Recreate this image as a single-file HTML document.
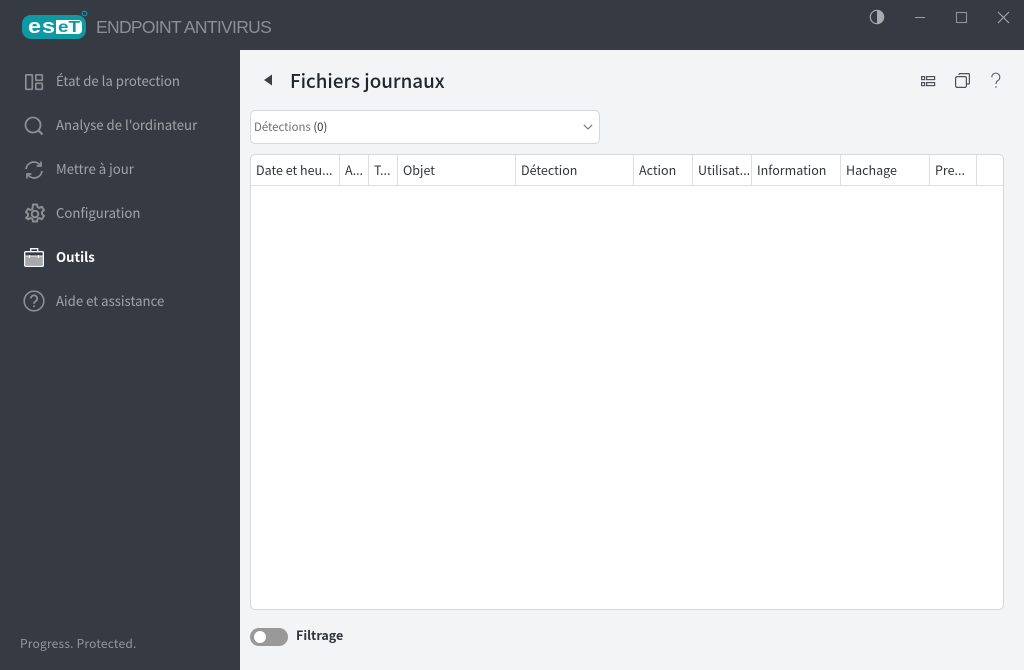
<!DOCTYPE html>
<html lang="fr"><head><meta charset="utf-8"><title>ESET Endpoint Antivirus</title>
<style>
html,body{margin:0;padding:0}
body{width:1024px;height:670px;overflow:hidden;position:relative;background:#f3f4f6;font-family:"Noto Sans CJK JP","Liberation Sans",sans-serif;}
.a{position:absolute;white-space:nowrap}
#top{left:0;top:0;width:1024px;height:50px;background:#363b43}
#side{left:0;top:50px;width:240px;height:620px;background:#363b43}
.nav{left:56px;font-size:13.2px;line-height:20px;color:#a0a3a7}
.th{top:155px;height:30px;line-height:30px;font-size:12.500px;color:#30353c;padding-left:5px;box-sizing:border-box}
.sep{top:155px;width:1px;height:30px;background:#dcdee0}
svg{position:absolute;overflow:visible}
</style></head><body>
<div class="a" id="top"></div><div class="a" id="side"></div>

<svg style="left:22px;top:15px" width="66" height="25" viewBox="0 0 66 25">
<rect x="0" y="0" width="64" height="24" rx="9" fill="#0f9aa3"/>
<path d="M34 5h22a4 4 0 0 1 4 4v6a4 4 0 0 1-4 4H34z" fill="#fff"/>
<text x="6" y="18" font-family="Liberation Sans" font-weight="700" font-size="20" fill="#fff" textLength="13" lengthAdjust="spacingAndGlyphs">e</text>
<text x="20" y="18" font-family="Liberation Sans" font-weight="700" font-size="20" fill="#fff" textLength="13" lengthAdjust="spacingAndGlyphs">s</text>
<text x="36" y="17" font-family="Liberation Sans" font-weight="700" font-size="16" fill="#0f9aa3" textLength="22" lengthAdjust="spacingAndGlyphs">eT</text>
<circle cx="62.500" cy="-1.500" r="2.300" fill="none" stroke="#0f9aa3" stroke-width="1.200"/>
</svg>
<div class="a" style="left:96px;top:15px;font-size:17.500px;line-height:24px;color:#8b8f95;letter-spacing:-.68px;font-family:'Liberation Sans',sans-serif">ENDPOINT ANTIVIRUS</div>

<svg style="left:869px;top:9px" width="16" height="16" viewBox="0 0 16 16"><circle cx="8" cy="8" r="6.700" fill="none" stroke="#a9abae" stroke-width="1.200"/><path d="M8 1.300a6.700 6.700 0 0 1 0 13.400z" fill="#a9abae"/></svg>
<svg style="left:914px;top:11px" width="12" height="12"><path d="M1 6.500h10" stroke="#9c9fa3" stroke-width="1"/></svg>
<svg style="left:956px;top:12px" width="12" height="12"><rect x=".5" y=".5" width="10" height="10" fill="none" stroke="#8f9296" stroke-width="1.100"/></svg>
<svg style="left:997px;top:11px" width="14" height="14"><path d="M1 1l11 11M12 1L1 12" stroke="#a4a6aa" stroke-width="1.100" fill="none"/></svg>

<svg style="left:24px;top:73px" width="20" height="18" viewBox="0 0 20 18" fill="none" stroke="#8b8e92" stroke-width="1.700"><rect x="1.800" y="1.800" width="6.500" height="14.500" rx=".7"/><rect x="11.800" y="1.800" width="6.500" height="5.500" rx=".7"/><rect x="11.800" y="10.300" width="6.500" height="6" rx=".7"/></svg>
<div class="a nav" style="top:71px">État de la protection</div>
<svg style="left:24px;top:116px" width="20" height="20" viewBox="0 0 20 20" fill="none" stroke="#8b8e92" stroke-width="1.800"><circle cx="9" cy="9" r="7.500"/><path d="M14.500 14.500l4 4" stroke-width="2.200"/></svg>
<div class="a nav" style="top:115px">Analyse de l'ordinateur</div>
<svg style="left:24px;top:160px" width="20" height="20" viewBox="0 0 20 20" fill="none" stroke="#8b8e92" stroke-width="1.800"><path d="M2 9a7.800 7.800 0 0 1 14-3.800"/><path d="M18 11a7.800 7.800 0 0 1-14 3.800"/><path d="M17 1.500v4.500h-4.500M3 18.500V14h4.500"/></svg>
<div class="a nav" style="top:159px">Mettre à jour</div>
<svg style="left:24px;top:203px" width="22" height="22" viewBox="0 0 22 22" fill="none" stroke="#8b8e92" stroke-width="2"><path d="M9 1.500h4l.6 2.700 1.800.8 2.400-1.300 2.200 3.400-2 1.800v2.200l2 1.800-2.200 3.400-2.400-1.300-1.800.8-.6 2.700H9l-.6-2.700-1.800-.8-2.400 1.300L2 14.900l2-1.800v-2.200L2 9.100l2.200-3.400 2.400 1.300 1.800-.8z" stroke-linejoin="round"/><circle cx="11" cy="11" r="3.300"/></svg>
<div class="a nav" style="top:203px">Configuration</div>
<svg style="left:24px;top:247px" width="21" height="21" viewBox="0 0 21 21"><path d="M6.700 5V1.700h7V5" fill="none" stroke="#f4f5f5" stroke-width="1.400"/><rect x=".7" y="4.700" width="18.600" height="14.600" rx="1" fill="#363b43" stroke="#f4f5f5" stroke-width="1.400"/><rect x="1.400" y="9" width="17.200" height="9.600" fill="#a6a8ab"/><path d="M1.400 9h17.200" stroke="#f4f5f5" stroke-width="1"/><path d="M5.500 8v3M14.500 8v3" stroke="#f4f5f5" stroke-width="1.200"/></svg>
<div class="a nav" style="top:247px;color:#fff;font-weight:700">Outils</div>
<svg style="left:23px;top:290px" width="22" height="22" viewBox="0 0 22 22" fill="none" stroke="#8b8e92" stroke-width="1.600"><circle cx="11" cy="11" r="9.800"/><path d="M7.800 8.500a3.200 3.200 0 1 1 4.800 2.800c-1.100.7-1.600 1.200-1.600 2.500" stroke-width="1.800"/><circle cx="11" cy="16.300" r="1" fill="#8b8e92" stroke="none"/></svg>
<div class="a nav" style="top:291px">Aide et assistance</div>
<div class="a" style="left:20px;top:635px;font-size:12px;line-height:18px;color:#94979b;letter-spacing:.2px">Progress. Protected.</div>

<svg style="left:263px;top:74px" width="10" height="12"><path d="M9 .5v11L1 6z" fill="#3a4047"/></svg>
<div class="a" style="left:290px;top:67px;font-size:18.800px;line-height:28px;font-weight:500;color:#1f262e">Fichiers journaux</div>
<svg style="left:920px;top:75px" width="16" height="13" viewBox="0 0 16 13" fill="none" stroke="#4a5058" stroke-width="1.200"><rect x="1.600" y="1.600" width="3" height="3"/><rect x="1.600" y="7.600" width="3" height="3"/><rect x="6.600" y="1.600" width="8" height="3"/><rect x="6.600" y="7.600" width="8" height="3"/></svg>
<svg style="left:954px;top:72px" width="17" height="17" viewBox="0 0 17 17" fill="none" stroke="#4a5058" stroke-width="1.200"><rect x="1.600" y="4.600" width="10.800" height="10.800" rx="1.500"/><path d="M5 3V2.600a1 1 0 0 1 1-1h8.400a1 1 0 0 1 1 1V11a1 1 0 0 1-1 1H13"/></svg>
<svg style="left:990px;top:73px" width="12" height="16" viewBox="0 0 12 16" fill="none" stroke="#5a6068" stroke-width="1.100"><path d="M1.800 4.200a4 4 0 1 1 6.200 3.300C6.500 8.500 6 9.300 6 11"/><circle cx="6" cy="14" r=".8" fill="#5a6068" stroke="none"/></svg>

<div class="a" style="left:250px;top:110px;width:350px;height:34px;box-sizing:border-box;background:#fff;border:1px solid #d5d7da;border-radius:5px"></div>
<div class="a" style="left:254px;top:118px;font-size:11.400px;line-height:18px;color:#6c7278">Détections <span style="color:#30353c">(0)</span></div>
<svg style="left:583px;top:124px" width="10" height="6"><path d="M.8.800L5 5l4.200-4.200" fill="none" stroke="#70757b" stroke-width="1.100"/></svg>

<div class="a" style="left:250px;top:154px;width:754px;height:456px;box-sizing:border-box;background:#fff;border:1px solid #d5d7da;border-radius:5px"></div>
<div class="a" style="left:251px;top:185px;width:752px;height:1px;background:#dcdee0"></div>
<div class="a th" style="left:251px">Date et heu...</div><div class="a sep" style="left:339px"></div>
<div class="a th" style="left:340px">A...</div><div class="a sep" style="left:368px"></div>
<div class="a th" style="left:369px">T...</div><div class="a sep" style="left:397px"></div>
<div class="a th" style="left:398px">Objet</div><div class="a sep" style="left:515px"></div>
<div class="a th" style="left:516px">Détection</div><div class="a sep" style="left:633px"></div>
<div class="a th" style="left:634px">Action</div><div class="a sep" style="left:692px"></div>
<div class="a th" style="left:693px">Utilisat...</div><div class="a sep" style="left:751px"></div>
<div class="a th" style="left:752px">Information</div><div class="a sep" style="left:840px"></div>
<div class="a th" style="left:841px">Hachage</div><div class="a sep" style="left:929px"></div>
<div class="a th" style="left:930px">Pre...</div><div class="a sep" style="left:976px"></div>

<div class="a" style="left:250px;top:628px;width:38px;height:18px;border-radius:9px;background:#999"></div>
<div class="a" style="left:254px;top:631px;width:12px;height:12px;border-radius:50%;background:#fff"></div>
<div class="a" style="left:296px;top:626px;font-size:12.500px;line-height:18px;font-weight:700;color:#30353c">Filtrage</div>
</body></html>
